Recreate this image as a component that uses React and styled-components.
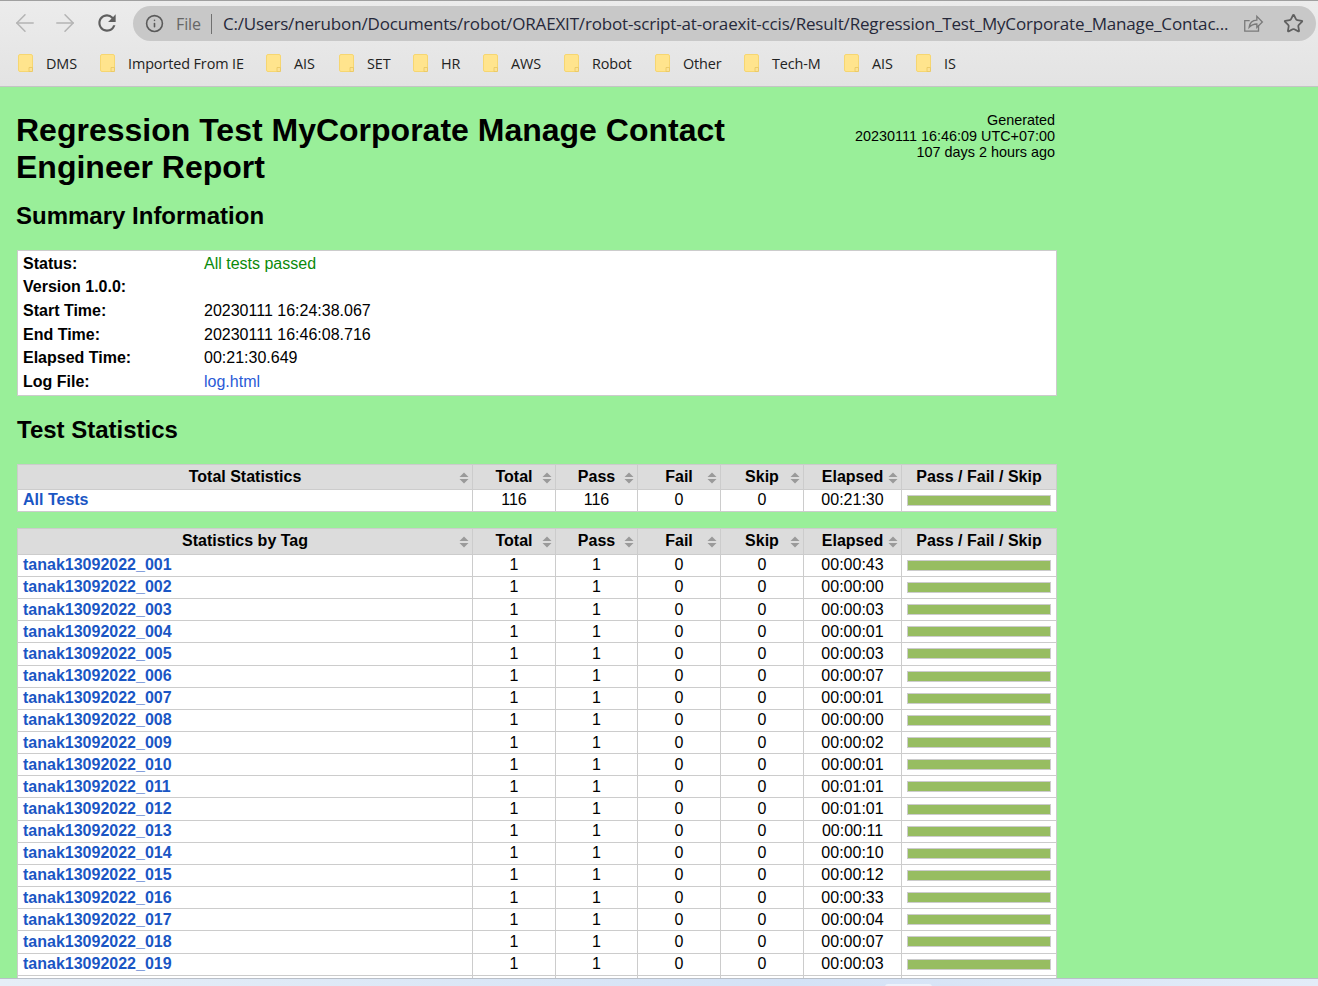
import React from "react";
import styled, { createGlobalStyle } from "styled-components";
import { ArrowLeft, ArrowRight, Info, Star } from "lucide-react";

const GlobalStyle = createGlobalStyle`
  html, body {
    margin: 0;
    padding: 0;
    height: 100%;
    overflow: hidden;
  }
  body {
    font-family: "Liberation Sans", Arial, sans-serif;
    color: #000;
  }
`;

const Window = styled.div`
  height: 986px;
  display: flex;
  flex-direction: column;
  overflow: hidden;
`;

const Chrome = styled.header`
  flex: none;
  height: 87px;
  box-sizing: border-box;
  background: linear-gradient(#ececec, #e3e3e3);
  border-top: 1px solid #a0a0a0;
  border-bottom: 1px solid #c4c4c4;
  font-family: "Open Sans", sans-serif;
`;

const Toolbar = styled.div`
  height: 40px;
  padding-top: 5px;
  display: flex;
  align-items: flex-start;
`;

const NavButtons = styled.div`
  display: flex;
  align-items: center;
  height: 28px;
  padding: 3px 0 0 5px;
  width: 118px;
  box-sizing: content-box;
  flex: none;
  margin-right: -5px;
`;

const NavIcon = styled.span`
  display: flex;
  justify-content: center;
  width: ${(p) => p.$w || 40}px;
  flex: none;
  color: ${(p) => p.$color};
`;

const Omnibox = styled.div`
  flex: 1;
  height: 35px;
  margin-left: 15px;
  margin-right: 2px;
  background: #c8c8c8;
  border-radius: 18px;
  display: flex;
  align-items: center;
  padding-left: 12px;
  color: #5a5a5a;
  min-width: 0;
`;

const FileLabel = styled.span`
  font-size: 16px;
  color: #666;
  margin-left: 12px;
  padding-right: 10px;
  border-right: 1px solid #707070;
  line-height: 20px;
  letter-spacing: -0.1px;
`;

const Url = styled.span`
  font-size: 17px;
  color: #26283a;
  margin-left: 11px;
  flex: 1;
  letter-spacing: -0.165px;
  white-space: nowrap;
  overflow: hidden;
`;

const OmniIcon = styled.span`
  display: flex;
  flex: none;
  margin-right: ${(p) => p.$gap}px;
  color: #666;
`;

const Bookmarks = styled.nav`
  height: 34px;
  display: flex;
  align-items: center;
  padding-left: 18px;
`;

const Bookmark = styled.a`
  display: flex;
  align-items: center;
  width: ${(p) => p.$w}px;
  flex: none;
  font-size: 14.4px;
  letter-spacing: -0.1px;
  color: #222;
  white-space: nowrap;
`;

const FolderIcon = styled.svg`
  width: 15px;
  height: 18px;
  margin-right: 13px;
  flex: none;
`;

const Page = styled.main`
  flex: 1;
  min-height: 0;
  background: #99ef99;
  overflow: hidden;
  padding: 20px 0 0 16px;
`;

const Content = styled.div`
  width: 1041px;
`;

const Head = styled.div`
  display: flex;
  justify-content: space-between;
  align-items: flex-start;
`;

const Title = styled.h1`
  margin: 5px 0 0;
  width: 740px;
  font-size: 32px;
  line-height: 37px;
  font-weight: 700;
`;

const Generated = styled.div`
  margin: 5px 2px 0 0;
  text-align: right;
  font-size: 14.4px;
  line-height: 16px;
`;

const SectionTitle = styled.h2`
  margin: ${(p) => p.$top}px 0 ${(p) => p.$bottom}px ${(p) => p.$left || 0}px;
  font-size: 24px;
  line-height: 28px;
  font-weight: 700;
`;

const InfoTable = styled.table`
  border-collapse: separate;
  border-spacing: 0;
  padding: 1px 0;
  width: 1040px;
  margin-left: 1px;
  background: #fff;
  border: 1px solid #ccc;
  box-sizing: border-box;
  font-size: 16px;
`;

const InfoLabel = styled.th`
  width: 176px;
  padding: 0 0 0 5px;
  height: 23.6px;
  text-align: left;
  font-weight: 700;
`;

const InfoValue = styled.td`
  padding: 0 0 0 5px;
  color: ${(p) => p.$color || "#000"};
`;

const StatTable = styled.table`
  border-collapse: collapse;
  table-layout: fixed;
  width: 1040px;
  margin: 0 0 16px 1px;
  background: #fff;
  font-size: 16px;
`;

const HeadCell = styled.th`
  position: relative;
  height: ${(p) => p.$height}px;
  padding: 0;
  background: #dcdcdc;
  border: 1px solid #ccc;
  text-align: center;
  font-weight: 700;
  white-space: nowrap;
  box-sizing: border-box;
`;

const SortArrows = styled.svg`
  position: absolute;
  right: 3px;
  top: 7px;
  width: 10px;
  height: 12px;
`;

const Cell = styled.td`
  height: 21.17px;
  padding: 0;
  border: 1px solid #ccc;
  text-align: center;
  line-height: 18px;
  white-space: nowrap;
`;

const NameCell = styled(Cell)`
  text-align: left;
  padding-left: 5px;
  font-weight: 700;
  color: #1a56c4;
`;

const GraphCell = styled(Cell)`
  padding: 0 5px;
`;

const Bar = styled.div`
  height: 9px;
  background: #97bd61;
  border: 1px solid #ccc;
`;

const Taskbar = styled.footer`
  flex: none;
  height: 8px;
  padding: 5px 0 0 885px;
  background: linear-gradient(90deg, #e6eef7, #d4e2f6 60%, #e3ecf8);
  border-top: 1px solid #b9bfc8;
  box-sizing: border-box;
  overflow: hidden;
`;

const TaskButton = styled.div`
  width: 47px;
  height: 6px;
  background: #edf2fb;
  border-radius: 3px 3px 0 0;
`;

const bookmarks = [
  ["DMS", 82],
  ["Imported From IE", 166],
  ["AIS", 73],
  ["SET", 74],
  ["HR", 70],
  ["AWS", 81],
  ["Robot", 91],
  ["Other", 89],
  ["Tech-M", 100],
  ["AIS", 72],
  ["IS", 40],
];

const tagElapsed = [
  "00:00:43", "00:00:00", "00:00:03", "00:00:01", "00:00:03", "00:00:07", "00:00:01",
  "00:00:00", "00:00:02", "00:00:01", "00:01:01", "00:01:01", "00:00:11", "00:00:10",
  "00:00:12", "00:00:33", "00:00:04", "00:00:07", "00:00:03",
];

const info = [
  ["Status:", "All tests passed", "#0a8a0a"],
  ["Version 1.0.0:", ""],
  ["Start Time:", "20230111 16:24:38.067"],
  ["End Time:", "20230111 16:46:08.716"],
  ["Elapsed Time:", "00:21:30.649"],
  ["Log File:", "log.html", "#2a5bd7"],
];

const Folder = () => (
  <FolderIcon viewBox="0 0 15 18">
    <rect x="0.5" y="0.5" width="14" height="17" rx="1.5" fill="#ffe48d" stroke="#f6d671" />
    <path d="M11 17.500v-4h3.500v4z" fill="#fde293" stroke="#e9c65f" strokeWidth="0.8" />
  </FolderIcon>
);

const Sort = () => (
  <SortArrows viewBox="0 0 10 12">
    <path d="M5 0.5 9.500 5h-9zM0.500 7h9L5 11.500z" fill="#9a9a9a" />
  </SortArrows>
);

const Columns = () => (
  <colgroup>
    <col style={{ width: 455 }} />
    <col style={{ width: 83 }} />
    <col style={{ width: 82 }} />
    <col style={{ width: 83 }} />
    <col style={{ width: 83 }} />
    <col style={{ width: 98 }} />
    <col style={{ width: 155 }} />
  </colgroup>
);

const StatHead = ({ name, height }) => (
  <thead>
    <tr>
      {[name, "Total", "Pass", "Fail", "Skip", "Elapsed"].map((label) => (
        <HeadCell key={label} $height={height}>
          {label}
          <Sort />
        </HeadCell>
      ))}
      <HeadCell $height={height}>Pass / Fail / Skip</HeadCell>
    </tr>
  </thead>
);

const StatRow = ({ name, total, elapsed }) => (
  <tr>
    <NameCell>{name}</NameCell>
    <Cell>{total}</Cell>
    <Cell>{total}</Cell>
    <Cell>0</Cell>
    <Cell>0</Cell>
    <Cell>{elapsed}</Cell>
    <GraphCell>
      <Bar />
    </GraphCell>
  </tr>
);

export default function App() {
  return (
    <Window>
      <GlobalStyle />
      <Chrome>
        <Toolbar>
          <NavButtons>
            <NavIcon $color="#b4b4b4"><ArrowLeft size={28} strokeWidth={1.3} /></NavIcon>
            <NavIcon $color="#b4b4b4"><ArrowRight size={28} strokeWidth={1.3} /></NavIcon>
            <NavIcon $color="#5f5f5f" $w={44}>
              <svg width="26" height="26" viewBox="0 0 24 24" fill="currentColor">
                <path d="M17.65 6.35A7.958 7.958 0 0 0 12 4c-4.420 0-7.990 3.580-7.990 8s3.570 8 7.990 8c3.730 0 6.840-2.550 7.730-6h-2.080A5.990 5.990 0 0 1 12 18c-3.310 0-6-2.690-6-6s2.690-6 6-6c1.660 0 3.140.690 4.220 1.780L13 11h7V4l-2.350 2.350z" />
              </svg>
            </NavIcon>
          </NavButtons>
          <Omnibox>
            <Info size={19} strokeWidth={2} color="#5a5a5a" />
            <FileLabel>File</FileLabel>
            <Url>C:/Users/nerubon/Documents/robot/ORAEXIT/robot-script-at-oraexit-ccis/Result/Regression_Test_MyCorporate_Manage_Contac...</Url>
            <OmniIcon $gap={19}>
              <svg width="22" height="22" viewBox="0 0 20 20" fill="none" stroke="#7a7a7a" strokeWidth="1.2">
                <path d="M15 11v5.500H2.500V7H7" />
                <path d="M6.500 13c.5-4 3-6.500 7-6.500V3l5 5.200-5 5V10c-3 0-5 .8-7 3z" />
              </svg>
            </OmniIcon>
            <OmniIcon $gap={12}><Star size={21} strokeWidth={2} color="#5f5f5f" /></OmniIcon>
          </Omnibox>
        </Toolbar>
        <Bookmarks>
          {bookmarks.map(([label, w], i) => (
            <Bookmark key={i} $w={w}>
              <Folder />
              {label}
            </Bookmark>
          ))}
        </Bookmarks>
      </Chrome>
      <Page>
        <Content>
          <Head>
            <Title>Regression Test MyCorporate Manage Contact Engineer Report</Title>
            <Generated>
              Generated
              <br />
              20230111 16:46:09 UTC+07:00
              <br />
              107 days 2 hours ago
            </Generated>
          </Head>
          <SectionTitle $top={16} $bottom={20}>Summary Information</SectionTitle>
          <InfoTable>
            <tbody>
              {info.map(([label, value, color]) => (
                <tr key={label}>
                  <InfoLabel>{label}</InfoLabel>
                  <InfoValue $color={color}>{value}</InfoValue>
                </tr>
              ))}
            </tbody>
          </InfoTable>
          <SectionTitle $top={20} $bottom={20} $left={1}>Test Statistics</SectionTitle>
          <StatTable>
            <Columns />
            <StatHead name="Total Statistics" height={25} />
            <tbody>
              <StatRow name="All Tests" total="116" elapsed="00:21:30" />
            </tbody>
          </StatTable>
          <StatTable>
            <Columns />
            <StatHead name="Statistics by Tag" height={26} />
            <tbody>
              {tagElapsed.map((elapsed, i) => (
                <StatRow
                  key={i}
                  name={`tanak13092022_${String(i + 1).padStart(3, "0")}`}
                  total="1"
                  elapsed={elapsed}
                />
              ))}
              <tr>
                <Cell /><Cell /><Cell /><Cell /><Cell /><Cell /><Cell />
              </tr>
            </tbody>
          </StatTable>
        </Content>
      </Page>
      <Taskbar>
        <TaskButton />
      </Taskbar>
    </Window>
  );
}
